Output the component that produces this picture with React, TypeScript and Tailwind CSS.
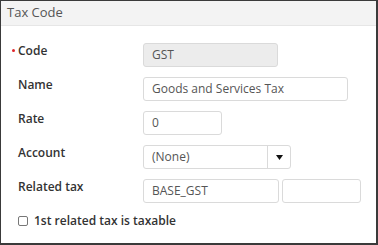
const font = { fontFamily: '"Open Sans", "Liberation Sans", sans-serif' };

function Row({ label, required, children }: { label: string; required?: boolean; children: React.ReactNode }) {
  return (
    <div className="flex items-start h-[24px]">
      <div className="relative w-[125px] text-[12px] leading-[16px] font-semibold text-[#333]">
        {required && (
          <span className="absolute left-[-6px] top-[6px] w-[3px] h-[3px] rounded-full bg-[#e0262b]" />
        )}
        {label}
      </div>
      {children}
    </div>
  );
}

function Input({ value, width, disabled }: { value?: string; width: string; disabled?: boolean }) {
  return (
    <div
      className={`${width} h-[24px] flex items-center px-[8px] text-[12px] text-[#555] border border-[#dadada] rounded-[3px] ${
        disabled ? 'bg-[#ececec]' : 'bg-white'
      }`}
    >
      {value}
    </div>
  );
}

export default function App() {
  return (
    <div
      style={font}
      className="w-[378px] h-[245px] bg-white border-l border-t border-r-2 border-b-2 border-[#3a3a3a] flex flex-col"
    >
      <div className="h-[25px] bg-[#f3f3f3] border-b border-[#e6e6e6] flex items-center pl-[6px] text-[13px] text-[#555]">
        Tax Code
      </div>
      <div className="pl-[17px] pt-[17px] flex flex-col gap-[10px]">
        <Row label="Code" required>
          <Input value="GST" width="w-[135px]" disabled />
        </Row>
        <Row label="Name">
          <Input value="Goods and Services Tax" width="w-[205px]" />
        </Row>
        <Row label="Rate">
          <Input value="0" width="w-[79px]" />
        </Row>
        <Row label="Account">
          <div className="w-[148px] h-[24px] flex border border-[#dadada] rounded-[3px] text-[12px] text-[#555]">
            <div className="flex-1 flex items-center px-[8px]">(None)</div>
            <div className="w-[23px] border-l border-[#dadada] flex items-center justify-center">
              <svg width="7" height="5" viewBox="0 0 7 5">
                <path d="M0 0 L7 0 L3.5 5 Z" fill="#111" />
              </svg>
            </div>
          </div>
        </Row>
        <Row label="Related tax">
          <div className="flex gap-[3px]">
            <Input value="BASE_GST" width="w-[136px]" />
            <Input width="w-[79px]" />
          </div>
        </Row>
        <div className="flex items-center gap-[6px] h-[16px] text-[12px] leading-[16px] font-semibold text-[#333]">
          <span className="w-[10px] h-[10px] border border-[#777] rounded-[2px] bg-white" />
          1st related tax is taxable
        </div>
      </div>
    </div>
  );
}
